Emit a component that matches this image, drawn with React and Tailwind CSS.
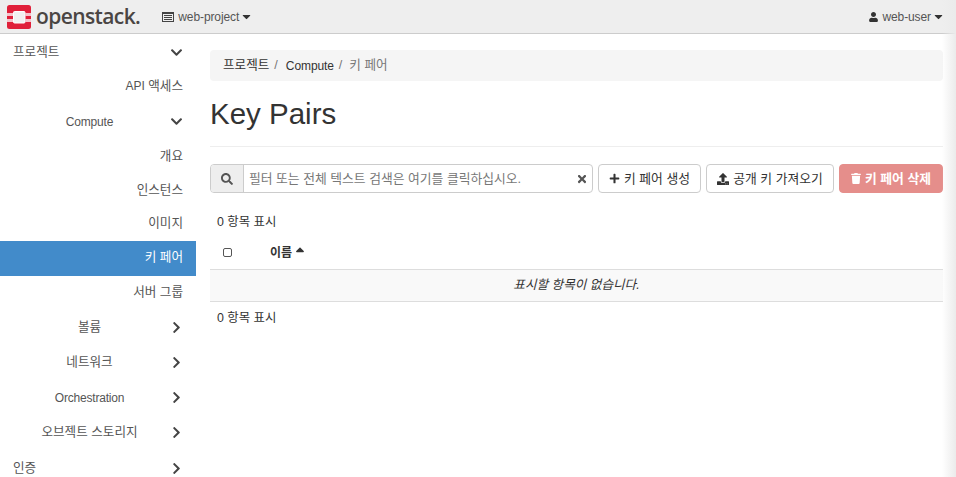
import React from 'react';
import { FaChevronDown, FaChevronRight, FaSearch, FaTimes, FaPlus, FaUpload, FaTrash, FaUser, FaCaretDown, FaSortUp } from 'react-icons/fa';

const KR = "font-['Liberation_Sans','Noto_Sans_CJK_KR',sans-serif]";

// left = top level, center = group, right = leaf
const nav = [
  { label: '프로젝트', kind: 'left', icon: 'down' },
  { label: <><span className="text-[12px]">API</span> 액세스</>, kind: 'right', tall: true },
  { label: 'Compute', kind: 'center', icon: 'down', en: true },
  { label: '개요', kind: 'right' },
  { label: '인스턴스', kind: 'right' },
  { label: '이미지', kind: 'right', lift: true },
  { label: '키 페어', kind: 'right', active: true, tall: true, lift: true },
  { label: '서버 그룹', kind: 'right', lift: true },
  { label: '볼륨', kind: 'center', icon: 'right' },
  { label: '네트워크', kind: 'center', icon: 'right' },
  { label: 'Orchestration', kind: 'center', icon: 'right', en: true },
  { label: '오브젝트 스토리지', kind: 'center', icon: 'right' },
  { label: '인증', kind: 'left', icon: 'right' },
];

const NavRow = ({ item }) => {
  const align =
    item.kind === 'left' ? 'text-left' : item.kind === 'center' ? 'text-center pl-[3px]' : 'text-right';
  const height = item.kind === 'right' && !item.tall ? 'h-[34px]' : 'h-[35px]';
  return (
    <div
      className={`flex items-center ${height} ${item.lift ? 'pb-[2px]' : ''} ${
        item.kind === 'left' ? 'pt-[2px]' : ''
      } pl-[13px] pr-[13px] ${item.en ? 'text-[12px] tracking-[-0.2px]' : 'text-[12.6px]'} ${
        item.active ? 'bg-[#428bca] text-white' : 'text-[#555]'
      }`}
    >
      <span className={`flex-1 ${align}`}>{item.label}</span>
      {item.icon === 'down' && <FaChevronDown className="w-[13px] h-[13px] text-[#444] ml-[7px]" />}
      {item.icon === 'right' && <FaChevronRight className="w-[13px] h-[13px] text-[#444] ml-[7px]" />}
    </div>
  );
};

const Logo = () => (
  <svg width="24" height="24" viewBox="0 0 24 24" className="shrink-0">
    <rect width="24" height="24" rx="2.5" fill="#e0203a" />
    <rect x="6.5" y="6.5" width="11.5" height="11.5" rx="1" fill="#f1f1f1" stroke="#ffffff" />
    <rect x="0" y="8" width="6" height="3" fill="#f6c3cb" />
    <rect x="0" y="14" width="6" height="3" fill="#f6c3cb" />
    <rect x="18" y="8" width="6" height="3" fill="#f6c3cb" />
    <rect x="18" y="14" width="6" height="3" fill="#f6c3cb" />
  </svg>
);

const Button = ({ icon, children, className = '' }) => (
  <button className={`flex items-center justify-center h-[29px] border rounded-[4px] text-[12.8px] ${className}`}>
    {icon}
    <span>{children}</span>
  </button>
);

export default function App() {
  return (
    <div className={`relative w-[956px] h-[477px] overflow-hidden bg-white text-[#333] ${KR}`}>
      <header className="flex items-center justify-between h-[34px] bg-[#eeeeee] border-b border-[#cccccc] pl-[7px] pr-[11px]">
        <div className="flex items-center">
          <Logo />
          <span className="ml-[5px] font-['Open_Sans',sans-serif] font-semibold text-[21px] leading-none text-[#4a4543] tracking-[-0.6px]">
            openstack.
          </span>
          <div className="flex items-center ml-[22px] text-[12px] tracking-[-0.1px] text-[#555]">
            <svg width="12" height="10" viewBox="0 0 12 10" className="mr-[4px]">
              <path fill="#444" fillRule="evenodd" d="M0 0h12v10H0zM1 2v7h10V2zM2 3h8v1H2zM2 5h8v1H2zM2 7h8v1H2z" />
            </svg>
            <span>web-project</span>
            <FaCaretDown className="w-[13px] h-[13px] ml-[1px] text-[#333]" />
          </div>
        </div>
        <div className="flex items-center text-[12px] tracking-[-0.1px] text-[#555]">
          <FaUser className="w-[9px] h-[10px] mr-[4px] text-[#333]" />
          <span>web-user</span>
          <FaCaretDown className="w-[13px] h-[13px] ml-[1px] text-[#333]" />
        </div>
      </header>

      <div className="flex">
        <nav className="w-[196px] shrink-0">
          {nav.map((item, i) => (
            <NavRow key={i} item={item} />
          ))}
        </nav>

        <main className="w-[733px] ml-[14px] pt-[16px]">
          <div className="flex items-center h-[31px] bg-[#f5f5f5] rounded-[4px] px-[13px] text-[12.6px]">
            <span>프로젝트</span>
            <span className="ml-[5px] text-[#777]">/</span>
            <span className="ml-[8px] text-[12px] tracking-[-0.1px]">Compute</span>
            <span className="ml-[5px] text-[#777]">/</span>
            <span className="ml-[7px] text-[#777]">키 페어</span>
          </div>

          <h1 className="mt-[15px] pb-[14px] border-b border-[#eeeeee] text-[29.5px] leading-[36px] text-[#333] font-['Liberation_Sans',sans-serif] h-[51px]">
            Key Pairs
          </h1>

          <div className="flex items-center mt-[17px]">
            <div className="flex w-[383px] h-[29px] border border-[#cccccc] rounded-[4px] overflow-hidden">
              <span className="flex items-center justify-center w-[33px] bg-[#eeeeee] border-r border-[#cccccc]">
                <FaSearch className="w-[12px] h-[12px] text-[#555]" />
              </span>
              <span className="flex-1 flex items-center pl-[5px] text-[12.8px] text-[#777]">
                필터 또는 전체 텍스트 검색은 여기를 클릭하십시오.
              </span>
              <span className="flex items-center pr-[4px]">
                <FaTimes className="w-[12px] h-[12px] text-[#555]" />
              </span>
            </div>
            <Button
              className="w-[103px] ml-[5px] border-[#cccccc] bg-white text-[#333]"
              icon={<FaPlus className="w-[11px] h-[11px] mr-[4px]" />}
            >
              키 페어 생성
            </Button>
            <Button
              className="w-[128px] ml-[5px] border-[#cccccc] bg-white text-[#333]"
              icon={<FaUpload className="w-[12px] h-[12px] mr-[4px]" />}
            >
              공개 키 가져오기
            </Button>
            <Button
              className="w-[104px] ml-[5px] border-[#e58e8b] bg-[#e58e8b] text-white font-bold"
              icon={<FaTrash className="w-[10px] h-[11px] mr-[4px]" />}
            >
              키 페어 삭제
            </Button>
          </div>

          <div className="mt-[21px] pl-[7px] h-[17px] leading-[17px] text-[12.4px]">0 항목 표시</div>

          <div className="flex items-center h-[34px] mt-[5px] border-b border-[#dddddd]">
            <span className="ml-[13px] w-[9px] h-[9px] border border-[#555] rounded-[2px]" />
            <span className="ml-[38px] text-[12px] font-bold">이름</span>
            <FaSortUp className="ml-[1px] w-[14px] h-[14px] text-[#333]" />
          </div>

          <div className="flex items-center justify-center h-[32px] bg-[#f9f9f9] border-b border-[#dddddd] text-[12.6px] italic">
            표시할 항목이 없습니다.
          </div>

          <div className="mt-[8px] pl-[7px] h-[17px] leading-[17px] text-[12.4px]">0 항목 표시</div>
        </main>
      </div>

      {/* soft shade down the right edge of the window */}
      <div className="absolute top-0 right-0 bottom-0 w-[14px] pointer-events-none bg-gradient-to-r from-transparent to-[#ebebeb]" />
    </div>
  );
}
